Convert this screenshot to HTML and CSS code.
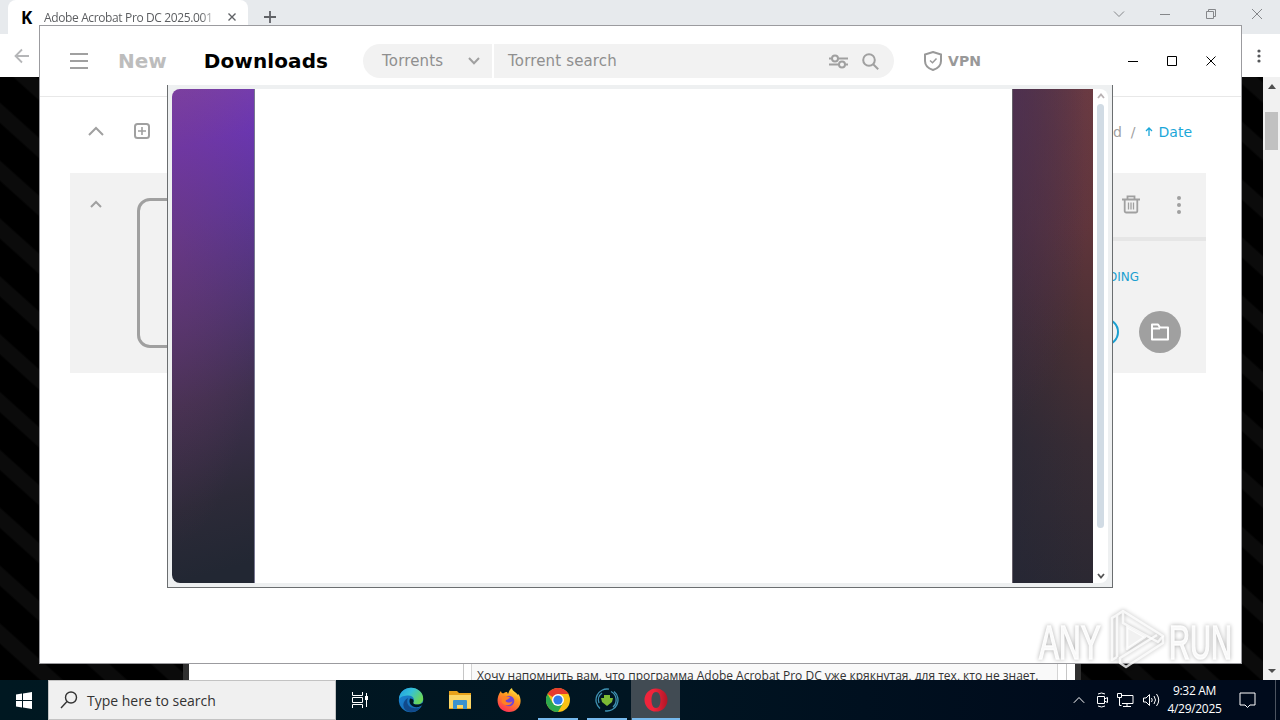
FILE: index.html
```
<!DOCTYPE html>
<html lang="en">
<head>
    <meta charset="UTF-8">
    <title>Desktop</title>
    <link rel="stylesheet" href="styles.css">
</head>
<body>
    <div class="desktop">
        <div class="browser">
            <div class="tab-strip">
                <div class="tab">
                    <span class="favicon">K</span>
                    <span class="tab-title">Adobe Acrobat Pro DC 2025.001</span>
                    <svg class="tab-close" width="10" height="10" viewBox="0 0 10 10"><path d="M1.5 1.5l7 7M8.5 1.5l-7 7"/></svg>
                </div>
                <svg class="new-tab" width="14" height="14" viewBox="0 0 14 14"><path d="M7 1v12M1 7h12"/></svg>
                <div class="browser-controls">
                    <svg width="12" height="12" viewBox="0 0 12 12"><path d="M1 3.5l5 5 5-5"/></svg>
                    <svg width="12" height="12" viewBox="0 0 12 12"><path d="M1 6.5h10"/></svg>
                    <svg width="12" height="12" viewBox="0 0 12 12"><path d="M1.5 3.500h7v7h-7zM3.500 3.500v-2h7v7h-2"/></svg>
                    <svg width="12" height="12" viewBox="0 0 12 12"><path d="M1 1l10 10M11 1L1 11"/></svg>
                </div>
            </div>
            <div class="toolbar">
                <svg class="back" width="16" height="16" viewBox="0 0 16 16"><path d="M15 8H2M8 1.500L1.500 8 8 14.500"/></svg>
                <svg class="menu-dots" width="4" height="14" viewBox="0 0 4 14"><circle cx="2" cy="2" r="1.600"/><circle cx="2" cy="7" r="1.600"/><circle cx="2" cy="12" r="1.600"/></svg>
            </div>
            <div class="page">
                <div class="page-body">
                    <div class="site">
                        <div class="post">
                            <div class="post-text">Хочу напомнить вам, что программа Adobe Acrobat Pro DC уже крякнутая, для тех, кто не знает.</div>
                        </div>
                    </div>
                </div>
                <div class="scrollbar">
                    <svg width="8" height="5" viewBox="0 0 8 5"><path d="M0 5l4-5 4 5z"/></svg>
                    <div class="scroll-thumb"></div>
                    <svg width="8" height="4" viewBox="0 0 8 4"><path d="M0 0l4 4 4-4z"/></svg>
                </div>
            </div>
        </div>

        <div class="app">
            <div class="app-header">
                <svg class="burger" width="18" height="18" viewBox="0 0 18 18"><path d="M0 2h18M0 9h18M0 16h18"/></svg>
                <span class="nav-link">New</span>
                <span class="nav-link active">Downloads</span>
                <div class="search">
                    <div class="search-type">
                        <span>Torrents</span>
                        <svg width="12" height="8" viewBox="0 0 12 8"><path d="M1 1l5 5.300L11 1"/></svg>
                    </div>
                    <div class="search-field">
                        <span>Torrent search</span>
                        <svg class="filters" width="19" height="15" viewBox="0 0 19 15"><path d="M0 4.500h3M9 4.500h10M0 10.500h10M16 10.500h3"/><circle cx="6" cy="4.500" r="3"/><circle cx="13" cy="10.500" r="3"/></svg>
                        <svg class="lens" width="17" height="17" viewBox="0 0 17 17"><circle cx="7" cy="7" r="5.800"/><path d="M11.200 11.200l5 5"/></svg>
                    </div>
                </div>
                <div class="vpn">
                    <svg width="18" height="20" viewBox="0 0 18 20"><path d="M9 1l8 2.500v6.500c0 4.500-3.500 7.500-8 9-4.500-1.500-8-4.500-8-9V3.500z"/><path class="tick" d="M6 9.500l2.500 2.300 4-4.300"/></svg>
                    <span>VPN</span>
                </div>
                <div class="window-controls">
                    <svg width="12" height="12" viewBox="0 0 12 12"><path d="M1 6.500h10"/></svg>
                    <svg width="12" height="12" viewBox="0 0 12 12"><path d="M1.500 1.500h9v9h-9z"/></svg>
                    <svg width="12" height="12" viewBox="0 0 12 12"><path d="M1.500 1.500l9 9M10.500 1.500l-9 9"/></svg>
                </div>
            </div>
            <div class="actions">
                <svg class="collapse" width="16" height="10" viewBox="0 0 16 10"><path d="M1 9l7-7 7 7"/></svg>
                <svg class="add" width="16" height="16" viewBox="0 0 16 16"><rect x="1" y="1" width="14" height="14" rx="2.500"/><path d="M8 4v8M4 8h8"/></svg>
                <div class="sort">
                    <span>Added</span>
                    <span class="slash">/</span>
                    <svg width="8" height="9" viewBox="0 0 8 9"><path d="M4 9V1M1 4l3-3 3 3"/></svg>
                    <span class="current">Date</span>
                </div>
            </div>
            <div class="download">
                <svg class="fold" width="12" height="8" viewBox="0 0 12 8"><path d="M1 7l5-5 5 5"/></svg>
                <div class="cover"></div>
                <div class="download-info">
                    <div class="download-top">
                        <svg width="18" height="19" viewBox="0 0 18 19"><path d="M0 4.500h18M5.500 4V1.300h7V4M2.700 5v11a1.500 1.500 0 0 0 1.500 1.500h9.600a1.500 1.500 0 0 0 1.500-1.500V5"/><path class="bars" d="M6.500 7.500v7M9 7.500v7M11.500 7.500v7"/></svg>
                        <svg class="dots" width="4" height="18" viewBox="0 0 4 18"><circle cx="2" cy="2" r="2"/><circle cx="2" cy="9" r="2"/><circle cx="2" cy="16" r="2"/></svg>
                    </div>
                    <div class="status">DOWNLOADING</div>
                    <div class="buttons">
                        <span class="ring"></span>
                        <span class="folder">
                            <svg width="20" height="20" viewBox="0 0 20 20"><path stroke-linejoin="round" d="M2 17.500V2.500h6l2 3h8v12zM2 6.500h8"/></svg>
                        </span>
                    </div>
                </div>
            </div>
        </div>

        <div class="popup">
            <div class="popup-view">
                <div class="side left"></div>
                <div class="blank"></div>
                <div class="side right"></div>
                <div class="popup-scroll">
                    <svg class="faded" width="8" height="6" viewBox="0 0 8 6"><path d="M1 5l3-3.500L7 5"/></svg>
                    <div class="popup-thumb"></div>
                    <svg width="8" height="6" viewBox="0 0 8 6"><path d="M1 1l3 3.500L7 1"/></svg>
                </div>
            </div>
        </div>

        <svg class="watermark" width="210" height="76" viewBox="0 0 210 76">
            <text x="8" y="53" textLength="98" lengthAdjust="spacingAndGlyphs" transform="translate(3 0) scale(.63 1)">ANY</text>
            <text x="0" y="53" textLength="100" lengthAdjust="spacingAndGlyphs" transform="translate(138 0) scale(.63 1)">RUN</text>
            <g stroke-linejoin="round">
                <path d="M92 5v12l35 19 5-6zM92 5l-6 4v42M86 9l-5 3v42l5-3"/>
                <path d="M132 30v7L95 61l-6-4v-5l37-23"/>
                <path class="play" d="M96 21v22l18-12z"/>
            </g>
        </svg>

        <div class="taskbar">
            <div class="start">
                <svg width="16" height="17" viewBox="0 0 16 17"><path d="M0 2.500L6 1.600V8H0zM7 1.400L16 0v8H7zM0 9h6v6.400l-6-.9zM7 9h9v8l-9-1.400z"/></svg>
            </div>
            <div class="taskbar-search">
                <svg width="18" height="18" viewBox="0 0 18 18"><circle cx="11" cy="6.500" r="5.500"/><path d="M7 10.500L1 17"/></svg>
                <span>Type here to search</span>
            </div>
            <div class="task">
                <svg class="task-view" width="17" height="16" viewBox="0 0 17 16"><path d="M.5 0v3.500h10V0M.5 16v-3.500h10V16M.5 5.500h10v5H.5zM14.500 1v14"/><path d="M14.500 4v4" stroke-width="3"/></svg>
            </div>
            <div class="task">
                <svg width="26" height="26" viewBox="0 0 26 26">
                    <defs>
                        <linearGradient id="edgeTop" x1="0" y1="0" x2="1" y2=".5"><stop offset="0" stop-color="#1f9be0"/><stop offset=".5" stop-color="#35c1d8"/><stop offset="1" stop-color="#6bd759"/></linearGradient>
                        <linearGradient id="edgeBottom" x1="0" y1="0" x2="1" y2="1"><stop offset="0" stop-color="#1b86d8"/><stop offset="1" stop-color="#1464a8"/></linearGradient>
                    </defs>
                    <circle cx="13" cy="13" r="12.200" fill="url(#edgeBottom)"/>
                    <path d="M1 12C1.500 5 7 .8 13 .8c7 0 12.200 5 12.200 10.700 0 4-3 6-6.500 6-2.500 0-4-.8-3.500-1.700 2-3 .2-7.300-4.700-7.300-4 0-8 1-9.500 3.500z" fill="url(#edgeTop)"/>
                    <path d="M10 11c-3 7 3 12.500 12.500 9.500C19 25 13 26 9 24c-5-3-5-10 1-13z" fill="#114a8b"/>
                    <path d="M12 11.500c-2 5 2 9.500 8.500 8.500l5.500-2.500V15c-3 3-11 3.500-10.800.8 1-1.500.5-4.500-3.200-4.300z" fill="#001824"/>
                </svg>
            </div>
            <div class="task">
                <svg width="22" height="20" viewBox="0 0 22 20"><path d="M0 1h8l2 2h12v16H0z" fill="#e8a21b"/><path d="M0 5h22v13H0z" fill="#fbd667"/><path d="M4 19v-8q0-1 1-1h12q1 0 1 1v8h-4v-4H8v4z" fill="#3b92cf"/></svg>
            </div>
            <div class="task">
                <svg width="24" height="24" viewBox="0 0 24 24">
                    <defs><linearGradient id="fox" x1=".8" y1="0" x2=".3" y2="1"><stop offset="0" stop-color="#fff04b"/><stop offset=".4" stop-color="#ff9a1e"/><stop offset="1" stop-color="#ff2e55"/></linearGradient></defs>
                    <path d="M4 3c0 1.500 1 2 2 2.500C8 4 9 4 10 4l1 2c1-3 2-5 4-6 0 3 4 4 6 7l.5-1C27 15 21 24 12 24 4 24-1 17 1 9c.5-2.500 2-5 3-6z" fill="url(#fox)"/>
                    <circle cx="12" cy="13" r="5.300" fill="#7144d8"/>
                    <path d="M5 9c3-2 5 0 8 0-1 3-4 2-4.500 4 2 2 5 2 7 0-1 5-8 6-11 1z" fill="#ff8124"/>
                </svg>
            </div>
            <div class="task open">
                <svg width="24" height="24" viewBox="0 0 24 24"><circle cx="12" cy="12" r="12" fill="#fbc116"/><path d="M12 12L1.600 6A12 12 0 0 1 22.400 6H12z" fill="#e63b2e"/><path d="M1.600 6A12 12 0 0 0 12 24l5.200-9H6.800z" fill="#2da94f"/><circle cx="12" cy="12" r="6" fill="#fff"/><circle cx="12" cy="12" r="4.600" fill="#2f7bea"/></svg>
            </div>
            <div class="task open">
                <svg width="24" height="24" viewBox="0 0 24 24"><g fill="none" stroke="#3f93b4" stroke-width="1.300"><path d="M5 20.500A11 11 0 0 1 14 1.200M19 3.500A11 11 0 0 1 10 22.800"/><path d="M16 3.500A9.500 9.500 0 0 1 18 19M4 15A8.500 8.500 0 0 1 7 5"/></g><path d="M9 7h6v3h3l-1 4-5 4-5-4-1-4h3z" fill="#7dbb35"/></svg>
            </div>
            <div class="task open focused">
                <svg width="24" height="24" viewBox="0 0 24 24">
                    <defs><linearGradient id="opera" x1="0" y1="0" x2="1" y2="0"><stop offset=".4" stop-color="#f0243b"/><stop offset="1" stop-color="#b01626"/></linearGradient></defs>
                    <path fill-rule="evenodd" d="M12 .5a11.500 11.500 0 1 0 0 23 11.500 11.500 0 0 0 0-23zM12 4c3 0 4.500 3.500 4.500 8S15 20 12 20s-4.500-3.500-4.500-8S9 4 12 4z" fill="url(#opera)"/>
                </svg>
            </div>
            <div class="tray">
                <svg width="12" height="8" viewBox="0 0 12 8"><path d="M.8 6.800L6 1.500l5.200 5.300"/></svg>
                <svg class="camera" width="12" height="16" viewBox="0 0 12 16"><path d="M1.500 4.500h7v7h-7zM8.500 7l3-1.500v5L8.500 9M2 2q3.500-2 7 0M2 14q3.500 2 7 0"/></svg>
                <svg width="17" height="14" viewBox="0 0 17 14"><path d="M5 2.500h11v8H5M.5.5h4v4h-4zM2.500 4.500v8h2M10 10.500v3M6 13.500h8"/></svg>
                <svg width="17" height="14" viewBox="0 0 17 14"><path d="M.5 5v4H3l3.500 3.500v-11L3 5zM8.500 5q1.500 2 0 4M11 3q3 4 0 8M13.500 1q4.500 6 0 12"/></svg>
            </div>
            <div class="clock">
                <span>9:32 AM</span>
                <span>4/29/2025</span>
            </div>
            <svg class="notes" width="17" height="17" viewBox="0 0 17 17"><path d="M1 1h15v12h-5l-2.500 2.500L6 13H1z"/></svg>
            <div class="peek"></div>
        </div>
    </div>
</body>
</html>
```
FILE: styles.css
```
* {
    margin: 0;
    padding: 0;
    box-sizing: border-box;
}

body {
    width: 1280px;
    height: 720px;
    overflow: hidden;
    font-family: "DejaVu Sans", Verdana, sans-serif;
}

svg {
    display: block;
    flex: none;
    fill: none;
    stroke: currentColor;
}

.desktop {
    position: relative;
    display: flex;
    flex-direction: column;
    height: 720px;
}

/* browser in the background */
.browser {
    display: flex;
    flex-direction: column;
    height: 680px;
}

.tab-strip {
    display: flex;
    height: 34px;
    padding-left: 8px;
    background: #e7eaed;
    color: #85878a;
}

.tab {
    display: flex;
    align-items: center;
    width: 240px;
    height: 34px;
    padding-left: 13px;
    background: #fff;
    border-radius: 8px 8px 0 0;
}

.favicon {
    width: 23px;
    font: bold 17px "Open Sans", sans-serif;
    color: #000;
}

.tab-title {
    width: 170px;
    white-space: nowrap;
    font: 12px "Open Sans", sans-serif;
    letter-spacing: -.37px;
    color: #5c5e61;
    -webkit-mask-image: linear-gradient(to right, #000 92%, rgba(0, 0, 0, .3));
}

.tab-close {
    margin-left: 13px;
    color: #606266;
    stroke-width: 1.4;
}

.new-tab {
    margin: 10px 0 0 15px;
    color: #606266;
    stroke-width: 1.8;
}

.browser-controls {
    display: flex;
    gap: 34px;
    margin: 8px 17px 0 auto;
}

.toolbar {
    display: flex;
    align-items: center;
    justify-content: space-between;
    height: 43px;
    padding: 0 19px 0 14px;
    background: #fff;
}

.back {
    color: #b5b6b8;
    stroke-width: 1.8;
}

.menu-dots {
    fill: #55575a;
    stroke: none;
}

.page {
    display: flex;
    flex: 1;
}

.page-body {
    display: flex;
    justify-content: flex-end;
    width: 1263px;
    padding-right: 182px;
    background: repeating-linear-gradient(42deg, #000 0, #000 26px, #0b0b0b 28px, #0b0b0b 41px, #000 43px);
}

.site {
    width: 898px;
    padding-left: 274px;
    background: #fff;
    border: solid #303030;
    border-width: 0 6px;
}

.post {
    width: 604px;
    height: 603px;
    padding: 585px 8px 0 7px;
    border: solid #c6c6c6;
    border-width: 0 1px;
    overflow: hidden;
}

.post-text {
    height: 18px;
    padding-left: 5px;
    border: solid #d4d4d4;
    border-width: 0 1px;
    background: #f9f9f9;
    font: 12px/28px "Open Sans", sans-serif;
    white-space: nowrap;
    color: #333;
}

.scrollbar {
    display: flex;
    flex-direction: column;
    align-items: center;
    width: 17px;
    padding: 7px 0 7px;
    background: #f1f1f1;
}

.scrollbar svg {
    fill: #505050;
    stroke: none;
}

.scroll-thumb {
    width: 13px;
    height: 38px;
    margin: 23px 0 auto;
    background: #c1c1c1;
}

/* torrent client window */
.app {
    position: absolute;
    top: 25px;
    left: 39px;
    width: 1203px;
    height: 639px;
    background: #fff;
    border: 1px solid #9b9b9f;
    color: #a0a0a0;
}

.app-header {
    display: flex;
    align-items: center;
    height: 71px;
    padding-left: 30px;
    border-bottom: 1px solid #e8e8e8;
}

.burger {
    stroke-width: 1.8;
}

.nav-link {
    margin-left: 30px;
    font-size: 20px;
    font-weight: bold;
    color: #bdbdbd;
}

.nav-link.active {
    margin-left: 37px;
    letter-spacing: .1px;
    color: #000;
}

.search {
    display: flex;
    gap: 2px;
    width: 531px;
    height: 34px;
    margin-left: 35px;
    font-size: 15px;
    letter-spacing: .15px;
    color: #8f8f8f;
}

.search-type,
.search-field {
    display: flex;
    align-items: center;
    background: #f2f2f2;
    stroke-width: 2;
}

.search-type {
    justify-content: space-between;
    width: 129px;
    padding: 0 12px 0 19px;
    border-radius: 17px 0 0 17px;
}

.search-field {
    flex: 1;
    padding: 0 15px 0 14px;
    border-radius: 0 17px 17px 0;
}

.search svg {
    color: #a0a0a0;
}

.filters {
    margin-left: auto;
}

.lens {
    margin-left: 14px;
}

.vpn {
    display: flex;
    align-items: center;
    gap: 6px;
    margin-left: 30px;
    font: bold 14px "DejaVu Sans", sans-serif;
    color: #999;
    stroke-width: 2;
}

.vpn .tick {
    stroke-width: 1.5;
}

.window-controls {
    display: flex;
    gap: 27px;
    margin: 0 24px 0 auto;
    color: #000;
}

.actions {
    display: flex;
    align-items: center;
    height: 76px;
    padding: 0 49px 0 48px;
    stroke-width: 2;
}

.actions > * {
    margin-top: -8px;
}

.actions .sort {
    margin-top: -7px;
}

.add {
    margin-left: 30px;
}

.add path {
    stroke-width: 1.6;
}

.sort {
    display: flex;
    align-items: center;
    margin-left: auto;
    font-size: 14px;
}

.slash {
    margin: 0 9px;
}

.sort svg {
    margin-right: 6px;
    color: #1ba7d9;
    stroke-width: 1.3;
}

.current {
    color: #1ba7d9;
}

.download {
    display: flex;
    width: 1136px;
    height: 200px;
    margin-left: 30px;
    background: #f2f2f2;
}

.fold {
    margin: 27px 0 0 20px;
    stroke-width: 2;
}

.cover {
    width: 150px;
    height: 150px;
    margin: 25px 0 0 35px;
    border: 3px solid #a0a0a0;
    border-radius: 13px;
}

.download-info {
    flex: 1;
}

.download-top {
    display: flex;
    align-items: center;
    justify-content: flex-end;
    gap: 37px;
    height: 68px;
    padding: 0 25px 1px 0;
    border-bottom: 4px solid #e6e6e6;
    stroke-width: 1.8;
}

.download-top .bars {
    stroke-width: 1.3;
}

.dots {
    fill: #a0a0a0;
    stroke: none;
}

.status {
    margin: 28px 67px 0 0;
    text-align: right;
    font-size: 12px;
    line-height: 16px;
    color: #1b9fd0;
}

.buttons {
    display: flex;
    align-items: center;
    justify-content: flex-end;
    gap: 20px;
    margin: 26px 25px 0 0;
}

.ring {
    width: 28px;
    height: 28px;
    border: 2px solid #1b9fd0;
    border-radius: 50%;
}

.folder {
    display: flex;
    align-items: center;
    justify-content: center;
    width: 42px;
    height: 42px;
    border-radius: 50%;
    background: #a0a0a0;
    color: #fff;
    stroke-width: 2;
}

/* popup over the client */
.popup {
    position: absolute;
    top: 85px;
    left: 167px;
    width: 946px;
    height: 503px;
    padding: 4px;
    background: #eef0f1;
    border: solid #6b6e70;
    border-width: 0 1px 1px;
}

.popup-view {
    display: flex;
    height: 494px;
    background: #fff;
    border-radius: 8px;
    overflow: hidden;
}

.side.left {
    width: 83px;
    border-right: 1px solid #777790;
    background: radial-gradient(90px 300px at 0 32%, rgba(130, 60, 105, .32), transparent), linear-gradient(165deg, #7a40a9 0%, #6a36b0 12%, #5d3699 26%, #4f3474 44%, #3f304f 62%, #2c2a38 82%, #222733 96%);
}

.blank {
    flex: 1;
}

.side.right {
    width: 81px;
    border-left: 1px solid #66606a;
    background: radial-gradient(85px 330px at 0 0, rgba(80, 48, 88, .7), transparent), linear-gradient(to right, rgba(32, 38, 55, .45), transparent 90%), linear-gradient(to bottom, #6c3b40 0%, #60353b 28%, #4b3034 50%, #382c34 72%, #2b2832 100%);
}

.popup-scroll {
    display: flex;
    flex-direction: column;
    align-items: center;
    width: 15px;
    padding: 4px 0;
    color: #555;
    stroke-width: 1.8;
}

.popup-scroll .faded {
    color: #b9b2b4;
}

.popup-thumb {
    width: 7px;
    height: 424px;
    margin: 5px 0 auto;
    background: #d1dbe4;
    border-radius: 4px;
}

.watermark {
    position: absolute;
    top: 606px;
    left: 1031px;
    stroke: rgba(255, 255, 255, .8);
    stroke-width: 2.5;
    filter: drop-shadow(0 0 2px rgba(0, 0, 0, .35));
}

.watermark .play {
    fill: rgba(255, 255, 255, .8);
}

.watermark text {
    font: 48px "Liberation Sans", Arial, sans-serif;
    fill: rgba(255, 255, 255, .9);
    stroke: rgba(255, 255, 255, .9);
    stroke-width: 1.5;
}

/* taskbar */
.taskbar {
    display: flex;
    position: relative;
    height: 40px;
    background: linear-gradient(to right, #001821, #001522 50%, #000b1c 85%);
    font-family: "Open Sans", sans-serif;
    color: #fff;
}

.start {
    display: flex;
    align-items: center;
    justify-content: center;
    width: 48px;
}

.start svg {
    fill: #fff;
    stroke: none;
}

.taskbar-search {
    display: flex;
    align-items: center;
    width: 288px;
    padding-left: 11px;
    background: #f0f0f0;
    border: 1px solid #c3c3c3;
    font-size: 14px;
    color: #333;
}

.taskbar-search span {
    margin-left: 9px;
}

.taskbar-search svg {
    stroke-width: 1.4;
}

.task {
    display: flex;
    align-items: center;
    justify-content: center;
    width: 49px;
}

.task:nth-child(4) {
    margin-left: 1px;
}

.task svg {
    stroke: none;
}

.task .task-view {
    stroke: #fff;
}

.task.open {
    background: linear-gradient(#76b9ed, #76b9ed) center bottom / 40px 2px no-repeat;
}

.task.focused {
    background: linear-gradient(#76b9ed, #76b9ed) center bottom / 48px 2px no-repeat #414b53;
}

.tray {
    display: flex;
    align-items: center;
    gap: 9px;
    margin-left: auto;
}

.tray .camera {
    margin: 0 0 0 2px;
}

.clock {
    display: flex;
    flex-direction: column;
    align-items: center;
    width: 69px;
    padding-top: 2px;
    font-size: 12px;
    line-height: 18px;
    letter-spacing: -.3px;
}

.notes {
    margin: 12px 19px 0 10px;
}

.peek {
    width: 5px;
    border-left: 1px solid #4c5460;
}
```
